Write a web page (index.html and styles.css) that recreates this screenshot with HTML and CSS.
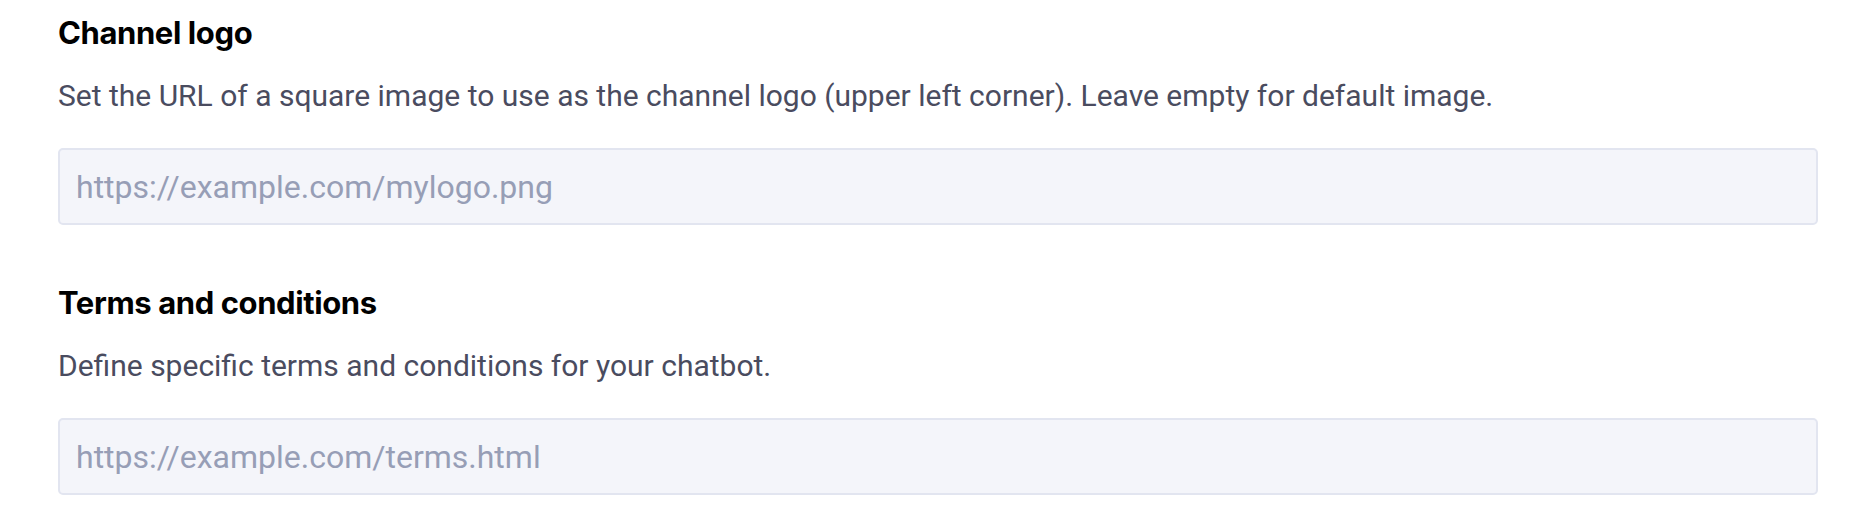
FILE: index.html
```html
<!DOCTYPE html>
<html lang="en">
<head>
<meta charset="utf-8">
<title>Channel settings</title>
<link rel="stylesheet" href="styles.css">
</head>
<body>
<main class="settings">
  <section class="field">
    <h2 class="field-title">Channel logo</h2>
    <p class="field-desc">Set the URL of a square image to use as the channel logo (upper left corner). Leave empty for default image.</p>
    <input class="field-input" type="text" placeholder="https://example.com/mylogo.png">
  </section>
  <section class="field">
    <h2 class="field-title">Terms and conditions</h2>
    <p class="field-desc">Define specific terms and conditions for your chatbot.</p>
    <input class="field-input" type="text" placeholder="https://example.com/terms.html">
  </section>
</main>
</body>
</html>
```
FILE: styles.css
```css
html, body {
  margin: 0;
  padding: 0;
  background: #ffffff;
}
body {
  font-family: Roboto, "Liberation Sans", sans-serif;
}
.settings {
  display: flex;
  flex-direction: column;
  gap: 58px;
  padding: 13px 56px 0 58px;
}
.field {
  display: flex;
  flex-direction: column;
}
.field-title {
  margin: 0;
  font-family: Inter, Roboto, sans-serif;
  font-weight: 700;
  font-size: 31px;
  line-height: 40px;
  letter-spacing: -0.4px;
  color: #000000;
}
.field-desc {
  margin: 23px 0 0;
  font-size: 30px;
  line-height: 40px;
  color: #4a4c5f;
}
.field-input {
  box-sizing: border-box;
  margin-top: 32px;
  width: 100%;
  height: 77px;
  padding: 0 16px;
  border: 2px solid #e2e5f0;
  border-radius: 5px;
  background: #f4f5fa;
  font-family: Roboto, "Liberation Sans", sans-serif;
  font-size: 32px;
  color: #333;
  outline: none;
}
.field-input::placeholder {
  color: #979eb6;
  opacity: 1;
}
```
